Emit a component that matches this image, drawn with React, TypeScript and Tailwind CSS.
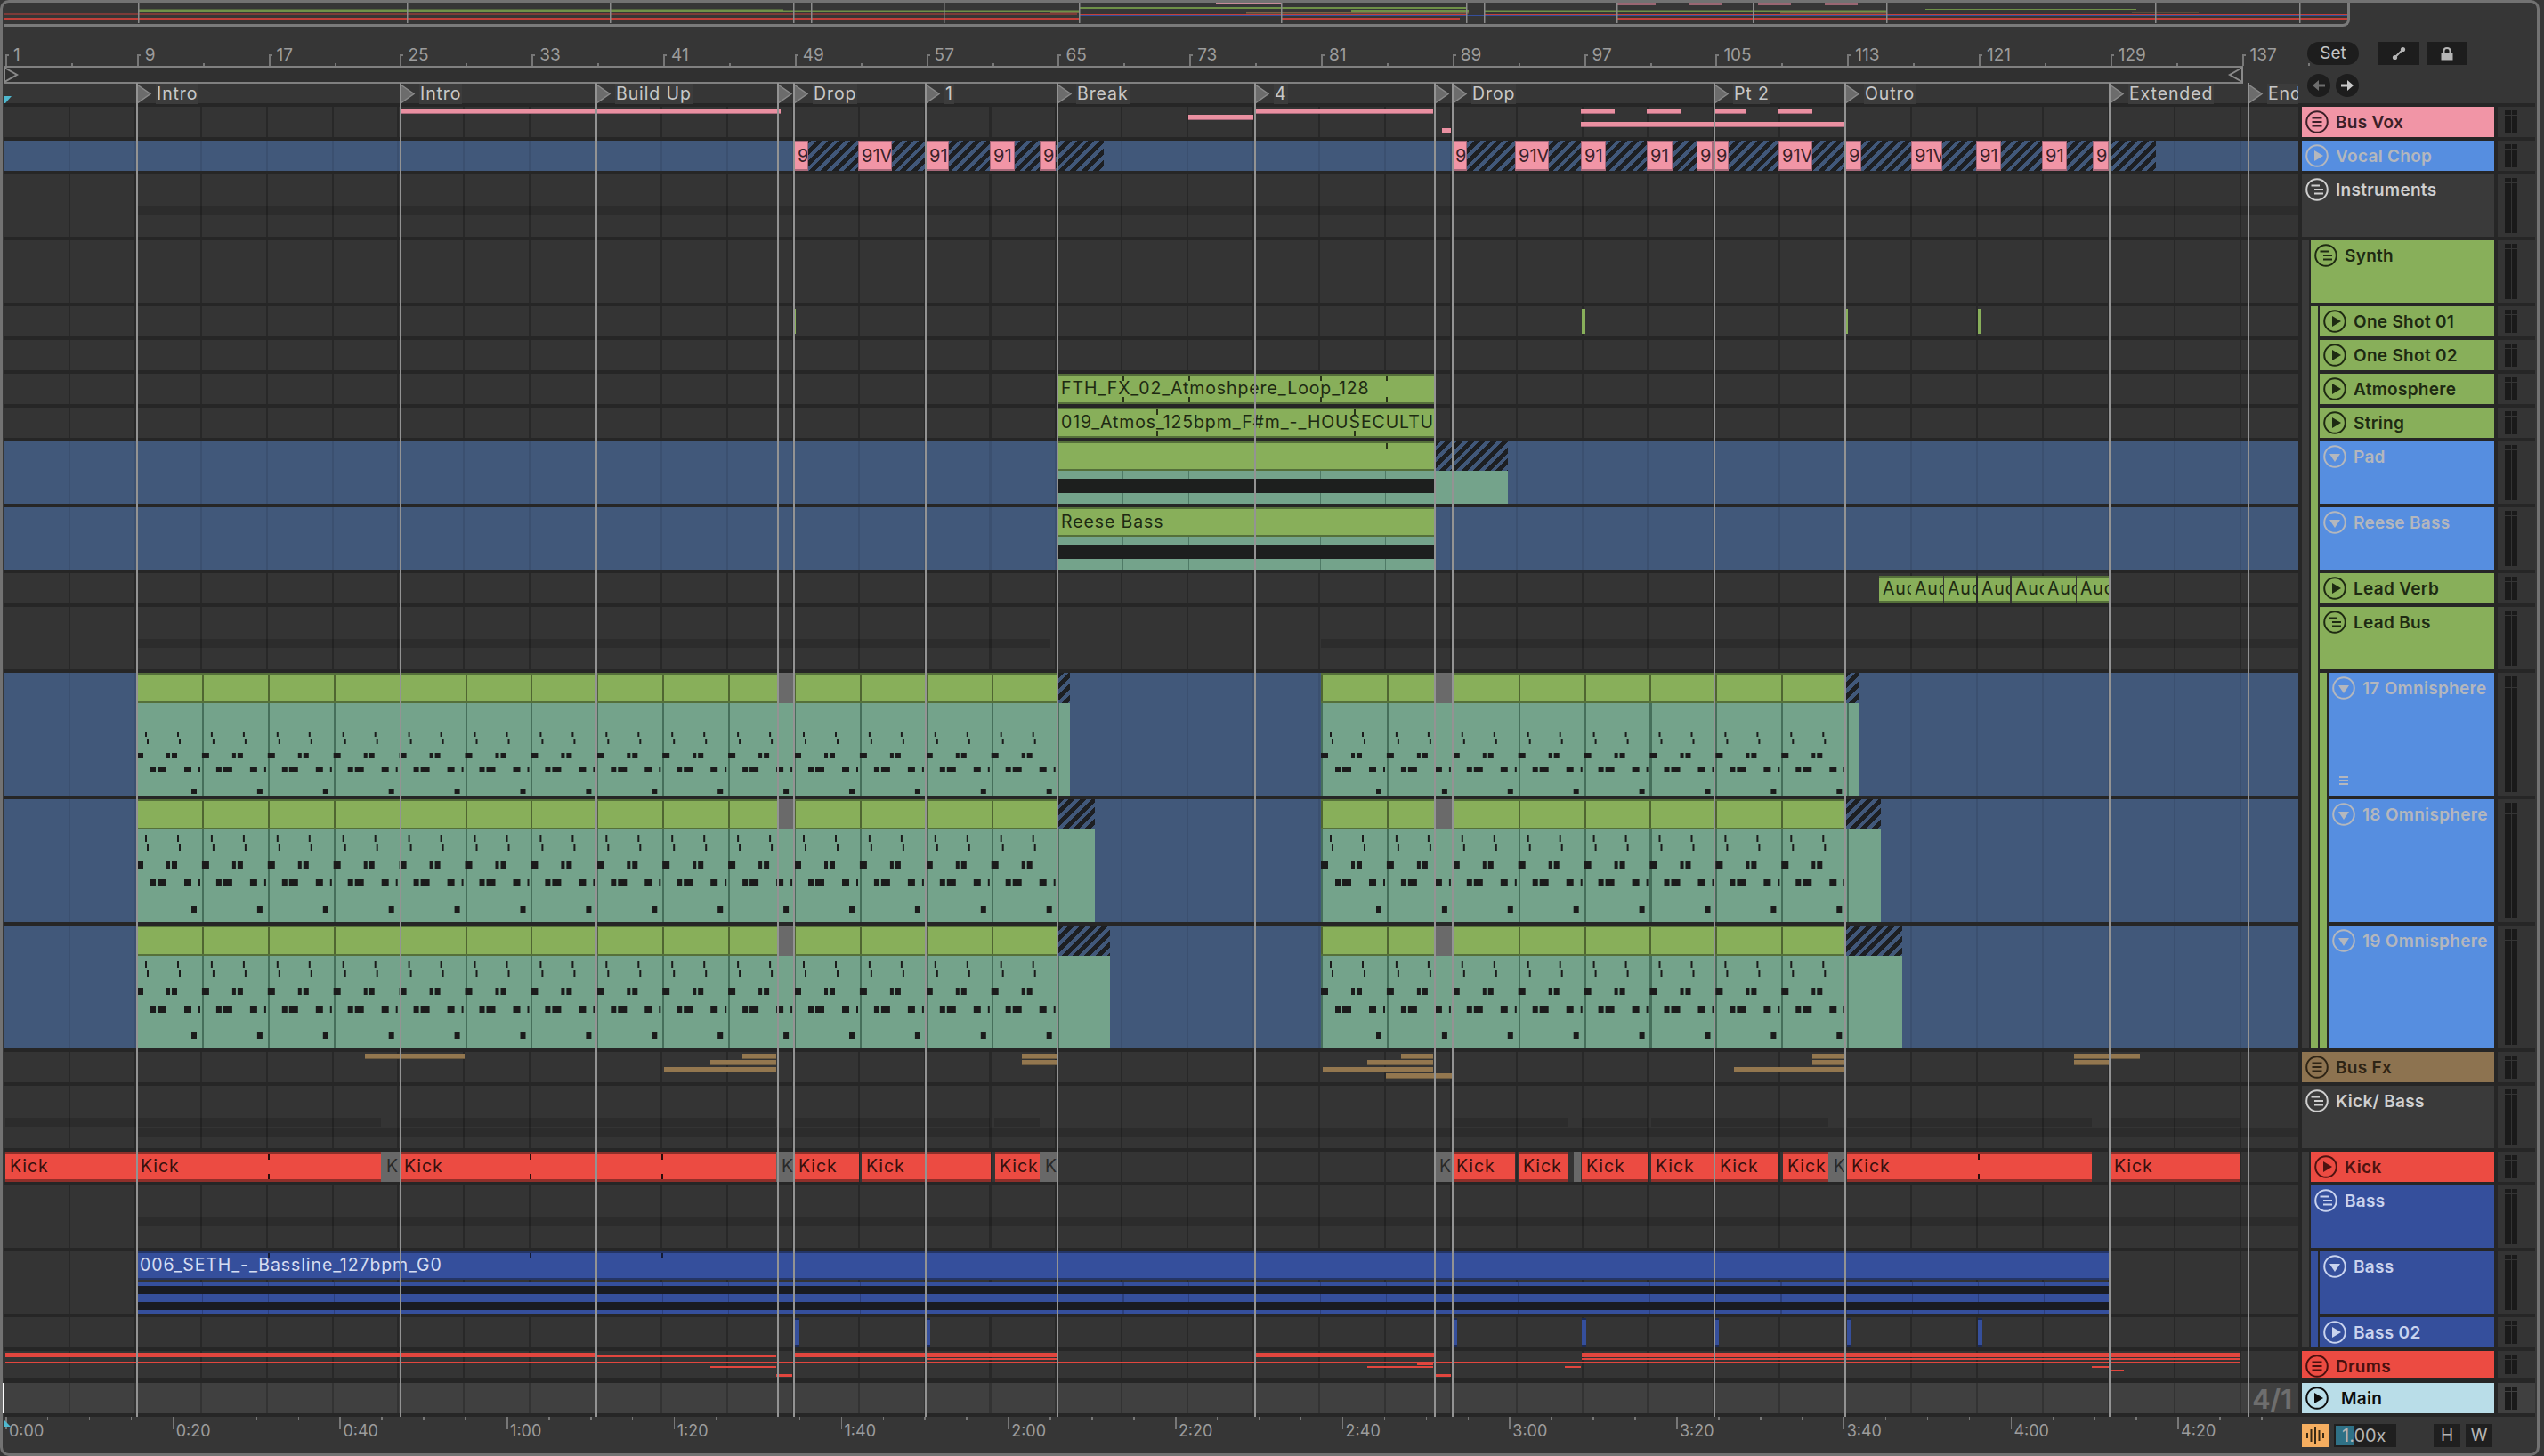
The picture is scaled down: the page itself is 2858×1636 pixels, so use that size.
import type { ReactNode } from "react";

// page x of the lane's left edge, clips below are given in page coordinates
const LANE_X = 4;
const SEG = 73.9;

const GRID_DARK =
  "bg-[repeating-linear-gradient(90deg,#282828_0,#282828_1px,#343434_1px,#343434_72.9px,#282828_72.9px,#282828_73.9px)]";
const GRID_BLUE =
  "bg-[repeating-linear-gradient(90deg,#3b5070_0,#3b5070_1px,#41587a_1px,#41587a_72.9px,#3b5070_72.9px,#3b5070_73.9px)]";
const GRID_MAIN =
  "bg-[repeating-linear-gradient(90deg,#333333_0,#333333_1px,#404040_1px,#404040_72.9px,#333333_72.9px,#333333_73.9px)]";
const HATCH =
  "bg-[repeating-linear-gradient(135deg,#1d1f22_0,#1d1f22_5px,#41587a_5px,#41587a_9px)]";
const CLIP_TEXT = "text-[19.5px] tracking-[0.9px] whitespace-nowrap";

const LOCATORS: [number, string][] = [
  [153, "Intro"],
  [449, "Intro"],
  [669, "Build Up"],
  [873, ""],
  [891, "Drop"],
  [1039, "1"],
  [1187, "Break"],
  [1409, "4"],
  [1611, ""],
  [1631, "Drop"],
  [1925, "Pt 2"],
  [2072, "Outro"],
  [2369, "Extended"],
  [2525, "End"],
];

function Box({
  x1,
  x2,
  y,
  h,
  className,
  children,
}: {
  x1: number;
  x2: number;
  y: number;
  h: number;
  className: string;
  children?: ReactNode;
}) {
  return (
    <div
      className={`absolute overflow-hidden ${className}`}
      style={{ left: x1 - LANE_X, width: x2 - x1, top: y, height: h }}
    >
      {children}
    </div>
  );
}

function Ticks({ at, x1, color, both = true }: { at: number[]; x1: number; color: string; both?: boolean }) {
  return (
    <>
      {at.map((t) => (
        <div key={t}>
          <div className="absolute top-0 w-[2px] h-[6px]" style={{ left: t - x1, background: color }} />
          {both && <div className="absolute bottom-0 w-[2px] h-[6px]" style={{ left: t - x1, background: color }} />}
        </div>
      ))}
    </>
  );
}

function ThinClips({ items, className }: { items: number[][]; className: string }) {
  return (
    <>
      {items.map(([a, b, y, h], i) => (
        <Box key={i} x1={a} x2={b} y={y} h={h} className={className} />
      ))}
    </>
  );
}

function ChopClip({ a, b, label }: { a: number; b: number; label: string }) {
  return (
    <Box
      x1={a}
      x2={b}
      y={0}
      h={34}
      className="flex items-center bg-[#f195a6] border-y-2 border-x border-[#a9697a] pl-[3px] whitespace-nowrap text-[20px] text-[#3a2229]"
    >
      {label}
    </Box>
  );
}

const CHOPS: [number, number, string][] = [
  [892, 908, "9"],
  [964, 1002, "91V"],
  [1040, 1066, "91"],
  [1112, 1140, "91"],
  [1168, 1186, "9"],
  [1631, 1648, "9"],
  [1702, 1740, "91V"],
  [1776, 1804, "91"],
  [1850, 1879, "91"],
  [1906, 1924, "9"],
  [1924, 1942, "9"],
  [1998, 2036, "91V"],
  [2073, 2091, "9"],
  [2147, 2182, "91V"],
  [2220, 2248, "91"],
  [2294, 2322, "91"],
  [2351, 2369, "9"],
];

function GreenClip({
  a,
  b,
  y = 0,
  h = 34,
  label,
  ticks = [],
  both = true,
}: {
  a: number;
  b: number;
  y?: number;
  h?: number;
  label?: string;
  ticks?: number[];
  both?: boolean;
}) {
  return (
    <Box
      x1={a}
      x2={b}
      y={y}
      h={h}
      className={`flex items-center bg-[#88af5a] border-y-2 border-[#55703a] pl-[4px] text-[#1e2a12] ${CLIP_TEXT}`}
    >
      {label}
      <Ticks at={ticks} x1={a} color="#2a3519" both={both} />
    </Box>
  );
}

// one pad-style clip: title over a solid black waveform band
function SolidClip({ label, tail, ticks }: { label?: string; tail?: boolean; ticks?: number[] }) {
  return (
    <>
      <GreenClip a={1188} b={1611} h={33} label={label} ticks={ticks} both={false} />
      <Box
        x1={1188}
        x2={1611}
        y={33}
        h={37}
        className="bg-[repeating-linear-gradient(90deg,#74a38b_0,#74a38b_72.9px,#4f7a66_72.9px,#4f7a66_73.9px)]"
      >
        <div className="absolute left-0 right-0 top-[9px] h-[16px] bg-[#1d1f1e]" />
      </Box>
      {tail && (
        <>
          <Box x1={1611} x2={1694} y={0} h={33} className={HATCH} />
          <Box x1={1611} x2={1694} y={33} h={37} className="bg-[#74a38b]" />
        </>
      )}
    </>
  );
}

const NOTES = [
  [0, 10, 2],
  [0, 46, 2],
  [1, 12, 2],
  [1, 48, 2],
  [2, 0, 8],
  [2, 34, 4],
  [2, 40, 6],
  [3, 16, 6],
  [3, 24, 10],
  [3, 54, 8],
  [3, 70, 2],
  [4, 62, 6],
];

function MidiClip({ a, b, tail, gray, noteY, noteH }: { a: number; b: number; tail: number; gray: number[]; noteY: number[]; noteH: number }) {
  const segs = Math.round((b - a) / SEG);
  return (
    <>
      <Box
        x1={a}
        x2={b}
        y={0}
        h={34}
        className="border-y-2 border-[#55703a] bg-[repeating-linear-gradient(90deg,#4f6531_0,#4f6531_2px,#88af5a_2px,#88af5a_73.9px)]"
      />
      <Box x1={gray[0]} x2={gray[1]} y={0} h={34} className="bg-[#6a6a6a]" />
      <Box x1={b} x2={tail} y={0} h={34} className={HATCH} />
      <Box
        x1={a}
        x2={tail}
        y={34}
        h={104}
        className="bg-[repeating-linear-gradient(90deg,#466f5b_0,#466f5b_2px,#74a38b_2px,#74a38b_73.9px)]"
      >
        <svg className="absolute left-0 top-0" width={tail - a} height={104}>
          {Array.from({ length: segs }).map((_, s) =>
            NOTES.map(([r, o, w], i) => (
              <rect key={`${s}-${i}`} x={s * SEG + o} y={noteY[r]} width={w} height={noteH} fill="#1b1b1b" />
            ))
          )}
        </svg>
      </Box>
    </>
  );
}

function MidiLane({ tails, noteY, noteH }: { tails: [number, number]; noteY: number[]; noteH: number }) {
  return (
    <>
      <MidiClip a={153} b={1188} tail={tails[0]} gray={[873, 891]} noteY={noteY} noteH={noteH} />
      <MidiClip a={1484} b={2072} tail={tails[1]} gray={[1611, 1631]} noteY={noteY} noteH={noteH} />
    </>
  );
}

function KickClip({ a, b, ticks = [] }: { a: number; b: number; ticks?: number[] }) {
  return (
    <Box
      x1={a}
      x2={b}
      y={0}
      h={34}
      className={`flex items-center bg-[#ec4b42] border-y-[3px] border-[#8f2f2a] pl-[5px] text-[#38100d] ${CLIP_TEXT}`}
    >
      Kick
      <Ticks at={ticks} x1={a} color="#28100e" />
    </Box>
  );
}

function GrayK({ a, b }: { a: number; b: number }) {
  return (
    <Box x1={a} x2={b} y={0} h={34} className={`flex items-center bg-[#686868] pl-[6px] text-[#2a2a2a] ${CLIP_TEXT}`}>
      {b - a > 10 ? "K" : ""}
    </Box>
  );
}

const BAND = "bg-[#000000]/15";

type Row = {
  name: string;
  h: string;
  head: string;
  icon: "group" | "stair" | "play" | "down";
  strip?: string[];
  last?: boolean;
  lane: string;
  big?: boolean;
  gap?: string;
  textX?: string;
  content?: ReactNode;
  extra?: ReactNode;
};

const G = "bg-[#3a3a3a]";
const L = "bg-[#88af5a]";
const N = "bg-[#354f9c]";
const GREEN_HEAD = "bg-[#88af5a] text-[#1e2a12]";
const BLUE_HEAD = "bg-[#568ee0] text-[#b4b7bd]";
const NAVY_HEAD = "bg-[#354f9c] text-[#c9d3ee]";

const ROWS: Row[] = [
  {
    name: "Bus Vox",
    h: "h-[34px]",
    head: "bg-[#f195a6] text-[#3b1f28]",
    icon: "group",
    lane: GRID_DARK,
    content: (
      <ThinClips
        className="bg-[#ea90a1] border-b border-[#a8687a]"
        items={[
          [449, 877, 2, 6],
          [1335, 1408, 9, 6],
          [1409, 1610, 2, 6],
          [1620, 1630, 24, 6],
          [1776, 1814, 2, 6],
          [1850, 1888, 2, 6],
          [1925, 1962, 2, 6],
          [1998, 2036, 2, 6],
          [1776, 2073, 17, 6],
        ]}
      />
    ),
  },
  {
    name: "Vocal Chop",
    h: "h-[34px]",
    head: BLUE_HEAD,
    icon: "play",
    lane: GRID_BLUE,
    content: (
      <>
        <Box x1={892} x2={1240} y={0} h={34} className={HATCH} />
        <Box x1={1631} x2={2422} y={0} h={34} className={HATCH} />
        {CHOPS.map(([a, b, t], i) => (
          <ChopClip key={i} a={a} b={b} label={t} />
        ))}
      </>
    ),
  },
  {
    name: "Instruments",
    h: "h-[70px]",
    head: "bg-[#3a3a3a] text-[#cfcfcf]",
    icon: "stair",
    lane: GRID_DARK,
    content: <Box x1={153} x2={2582} y={36} h={10} className={BAND} />,
  },
  { name: "Synth", h: "h-[70px]", head: GREEN_HEAD, icon: "stair", strip: [G], lane: GRID_DARK },
  {
    name: "One Shot 01",
    h: "h-[34px]",
    head: GREEN_HEAD,
    icon: "play",
    strip: [G, L],
    lane: GRID_DARK,
    content: (
      <ThinClips className="bg-[#88af5a]" items={[[891, 894, 3, 28], [1777, 1781, 3, 28], [2073, 2076, 3, 28], [2222, 2225, 3, 28]]} />
    ),
  },
  { name: "One Shot 02", h: "h-[34px]", head: GREEN_HEAD, icon: "play", strip: [G, L], lane: GRID_DARK },
  {
    name: "Atmosphere",
    h: "h-[34px]",
    head: GREEN_HEAD,
    icon: "play",
    strip: [G, L],
    lane: GRID_DARK,
    content: <GreenClip a={1188} b={1611} label="FTH_FX_02_Atmoshpere_Loop_128" ticks={[1261, 1335, 1483, 1557]} />,
  },
  {
    name: "String",
    h: "h-[34px]",
    head: GREEN_HEAD,
    icon: "play",
    strip: [G, L],
    lane: GRID_DARK,
    content: <GreenClip a={1188} b={1611} label="019_Atmos_125bpm_F#m_-_HOUSECULTURE" ticks={[1299, 1521]} />,
  },
  {
    name: "Pad",
    h: "h-[70px]",
    head: BLUE_HEAD,
    icon: "down",
    strip: [G, L],
    lane: GRID_BLUE,
    content: <SolidClip tail ticks={[1557]} />,
  },
  {
    name: "Reese Bass",
    h: "h-[70px]",
    head: BLUE_HEAD,
    icon: "down",
    strip: [G, L],
    lane: GRID_BLUE,
    content: <SolidClip label="Reese Bass" />,
  },
  {
    name: "Lead Verb",
    h: "h-[34px]",
    head: GREEN_HEAD,
    icon: "play",
    strip: [G, L],
    lane: GRID_DARK,
    content: (
      <>
        {[2111, 2147, 2184, 2222, 2260, 2296, 2333].map((x) => (
          <GreenClip key={x} a={x} b={x + 36} y={3} h={30} label="Aud" />
        ))}
      </>
    ),
  },
  {
    name: "Lead Bus",
    h: "h-[70px]",
    head: GREEN_HEAD,
    icon: "stair",
    strip: [G, L],
    lane: GRID_DARK,
    content: (
      <>
        <Box x1={153} x2={1180} y={36} h={10} className={BAND} />
        <Box x1={1484} x2={2582} y={36} h={10} className={BAND} />
      </>
    ),
  },
  {
    name: "17 Omnisphere",
    h: "h-[138px]",
    head: BLUE_HEAD,
    icon: "down",
    strip: [G, L, L],
    lane: GRID_BLUE,
    big: true,
    content: <MidiLane tails={[1202, 2089]} noteY={[32, 40, 56, 72, 96]} noteH={6} />,
    extra: (
      <div className="absolute left-[12px] bottom-[12px] flex w-[10px] flex-col gap-[2px]">
        <div className="h-[2px] bg-[#b4b7bd]" />
        <div className="h-[2px] bg-[#b4b7bd]" />
        <div className="h-[2px] bg-[#b4b7bd]" />
      </div>
    ),
  },
  {
    name: "18 Omnisphere",
    h: "h-[138px]",
    head: BLUE_HEAD,
    icon: "down",
    strip: [G, L, L],
    lane: GRID_BLUE,
    big: true,
    content: <MidiLane tails={[1230, 2113]} noteY={[6, 16, 36, 56, 86]} noteH={8} />,
  },
  {
    name: "19 Omnisphere",
    h: "h-[138px]",
    head: BLUE_HEAD,
    icon: "down",
    strip: [G, L, L],
    last: true,
    lane: GRID_BLUE,
    big: true,
    content: <MidiLane tails={[1247, 2137]} noteY={[6, 16, 36, 56, 86]} noteH={8} />,
  },
  {
    name: "Bus Fx",
    h: "h-[34px]",
    head: "bg-[#8d7350] text-[#2e2415]",
    icon: "group",
    lane: GRID_DARK,
    content: (
      <ThinClips
        className="bg-[#93774f] border-b border-[#6b5a40]"
        items={[
          [410, 522, 2, 6],
          [834, 872, 2, 6],
          [798, 872, 9, 6],
          [746, 872, 17, 6],
          [1148, 1187, 2, 6],
          [1148, 1187, 9, 6],
          [1574, 1610, 2, 6],
          [1536, 1610, 9, 6],
          [1486, 1610, 17, 6],
          [1557, 1631, 24, 6],
          [2036, 2072, 2, 6],
          [2036, 2072, 9, 6],
          [1948, 2072, 17, 6],
          [2330, 2404, 2, 6],
          [2330, 2369, 9, 6],
        ]}
      />
    ),
  },
  {
    name: "Kick/ Bass",
    h: "h-[70px]",
    head: "bg-[#3a3a3a] text-[#cfcfcf]",
    icon: "stair",
    lane: GRID_DARK,
    content: (
      <>
        <ThinClips
          className={BAND}
          items={[
            [6, 428, 36, 10],
            [449, 872, 36, 10],
            [892, 1112, 36, 10],
            [1117, 1168, 36, 10],
            [1631, 1762, 36, 10],
            [1777, 1851, 36, 10],
            [1855, 2054, 36, 10],
            [2075, 2350, 36, 10],
            [2370, 2516, 36, 10],
          ]}
        />
        <Box x1={153} x2={2582} y={48} h={10} className={BAND} />
      </>
    ),
  },
  {
    name: "Kick",
    h: "h-[34px]",
    head: "bg-[#ec4b42] text-[#4f1310]",
    icon: "play",
    strip: [G],
    lane: GRID_DARK,
    content: (
      <>
        <KickClip a={6} b={153} />
        <KickClip a={153} b={428} ticks={[301]} />
        <GrayK a={428} b={449} />
        <KickClip a={449} b={872} ticks={[595, 743]} />
        <GrayK a={872} b={892} />
        <KickClip a={892} b={965} />
        <KickClip a={968} b={1113} />
        <KickClip a={1118} b={1168} />
        <GrayK a={1168} b={1187} />
        <GrayK a={1611} b={1631} />
        <KickClip a={1631} b={1702} />
        <KickClip a={1706} b={1762} />
        <GrayK a={1768} b={1776} />
        <KickClip a={1777} b={1851} />
        <KickClip a={1855} b={1926} />
        <KickClip a={1927} b={1998} />
        <KickClip a={2003} b={2054} />
        <GrayK a={2054} b={2073} />
        <KickClip a={2075} b={2350} ticks={[2222]} />
        <KickClip a={2370} b={2516} />
      </>
    ),
  },
  {
    name: "Bass",
    h: "h-[70px]",
    head: NAVY_HEAD,
    icon: "stair",
    strip: [G],
    lane: GRID_DARK,
    content: <Box x1={153} x2={2582} y={36} h={10} className={BAND} />,
  },
  {
    name: "Bass",
    h: "h-[70px]",
    head: NAVY_HEAD,
    icon: "down",
    strip: [G, N],
    lane: GRID_DARK,
    content: (
      <>
        <Box
          x1={153}
          x2={2369}
          y={0}
          h={32}
          className={`flex items-center bg-[#354f9c] border-y-2 border-[#243566] pl-[4px] text-[#d5ddf2] ${CLIP_TEXT}`}
        >
          006_SETH_-_Bassline_127bpm_G0
          <Ticks at={[301, 595, 743]} x1={153} color="#161c33" both={false} />
        </Box>
        <Box x1={153} x2={2369} y={34} h={36} className="bg-[repeating-linear-gradient(90deg,#2b3f7d_0,#2b3f7d_1px,#354f9c_1px,#354f9c_73.9px)]">
          <div className="absolute left-0 right-0 top-[5px] h-[9px] bg-[#191b22]" />
          <div className="absolute left-0 right-0 top-[23px] h-[9px] bg-[#191b22]" />
        </Box>
      </>
    ),
  },
  {
    name: "Bass 02",
    h: "h-[34px]",
    head: NAVY_HEAD,
    icon: "play",
    strip: [G, N],
    last: true,
    lane: GRID_DARK,
    content: (
      <ThinClips
        className="bg-[#354f9c] border-y-2 border-[#1c2a55]"
        items={[893, 1040, 1632, 1777, 1926, 2075, 2222].map((x) => [x, x + 5, 1, 32])}
      />
    ),
  },
  {
    name: "Drums",
    h: "h-[30px]",
    head: "bg-[#ec4b42] text-[#4a100e]",
    icon: "group",
    gap: "mb-[6px]",
    lane: GRID_DARK,
    content: (
      <ThinClips
        className="bg-[#e2463e]"
        items={[
          [6, 669, 2, 2],
          [892, 1187, 2, 2],
          [1409, 1611, 2, 2],
          [1777, 2516, 2, 2],
          [6, 872, 5, 2],
          [892, 1187, 5, 2],
          [1409, 1611, 5, 2],
          [1777, 2516, 5, 2],
          [1039, 1187, 8, 2],
          [1777, 2516, 8, 2],
          [6, 2516, 12, 2],
          [1592, 1610, 14, 2],
          [798, 872, 17, 2],
          [1536, 1610, 17, 2],
          [1758, 1776, 17, 2],
          [2350, 2369, 17, 2],
          [2369, 2386, 21, 2],
          [872, 890, 26, 2],
          [872, 890, 28, 1],
          [1611, 1630, 26, 2],
          [1611, 1630, 28, 1],
        ]}
      />
    ),
  },
  {
    name: "Main",
    h: "h-[34px]",
    head: "bg-[#b9dde8] text-[#0d0d0d]",
    icon: "play",
    lane: GRID_MAIN,
    textX: "ml-[6px]",
    content: (
      <div className="absolute right-[7px] top-[1px] text-[30px] font-bold leading-[34px] text-[#6e6e6e]">4/1</div>
    ),
  },
];

function TrackIcon({ kind }: { kind: Row["icon"] }) {
  return (
    <svg className="shrink-0" width="26" height="26" viewBox="0 0 26 26" fill="none" stroke="currentColor">
      <circle cx="13" cy="13" r="11.8" strokeWidth="2" />
      {kind === "group" && (
        <path d="M7.5 8.5H18.5M7.5 13H18.5M7.5 17.5H18.5" strokeWidth="2.2" />
      )}
      {kind === "stair" && (
        <path d="M6.5 8.5H16M10 13H20M10 17.5H20" strokeWidth="2.2" />
      )}
      {kind === "play" && <path d="M10 7L20 13L10 19Z" fill="currentColor" stroke="none" />}
      {kind === "down" && <path d="M7 10H19L13 19Z" fill="currentColor" stroke="none" />}
    </svg>
  );
}

function Meter({ big, main }: { big?: boolean; main?: boolean }) {
  return (
    <div className={`flex h-full w-[42px] gap-[1px] py-[4px] pl-[8px] ${main ? "bg-[#404040]" : "bg-[#343434]"}`}>
      {["w-[7px]", "w-[6px]"].map((w) => (
        <div key={w} className={`flex ${w} flex-col gap-[1px]`}>
          <div className={`${big ? "h-[12px]" : "h-[5px]"} bg-[#1a1a1a]`} />
          <div className="flex-1 bg-[#1a1a1a]" />
        </div>
      ))}
    </div>
  );
}

function TrackRow({ row }: { row: Row }) {
  const gap = row.gap ?? "mb-[4px]";
  return (
    <div className="flex bg-[#262626]">
      <div className={`relative w-[2578px] overflow-hidden ${row.h} ${gap} ${row.lane}`}>{row.content}</div>
      <div className="ml-[4px] flex w-[216px]">
        {(row.strip ?? []).map((c, i) => (
          <div key={i} className="flex">
            <div className={`w-[8px] ${c} ${row.last ? gap : ""}`} />
            <div className="w-[2px]" />
          </div>
        ))}
        <div className={`relative flex flex-1 items-start gap-[8px] pl-[4px] pt-[4px] ${row.h} ${gap} ${row.head}`}>
          <TrackIcon kind={row.icon} />
          <span className={`pt-[1px] text-[19px] font-semibold leading-[26px] tracking-[0.3px] whitespace-nowrap ${row.textX ?? ""}`}>{row.name}</span>
          {row.extra}
        </div>
      </div>
      <div className={`ml-[4px] ${row.h} ${gap}`}>
        <Meter big={row.big} main={row.name === "Main"} />
      </div>
    </div>
  );
}

function BarRuler() {
  const labels = Array.from({ length: 18 }).map((_, i) => i * 8 + 1);
  return (
    <div className="relative h-[44px] text-[19px] text-[#9c9c9c]">
      {labels.map((n, i) => {
        const x = 6 + i * 147.8 - LANE_X;
        return (
          <div key={n}>
            <div className="absolute top-[31px] h-[13px] w-[2px] bg-[#777777]" style={{ left: x }} />
            <div className="absolute top-[31px] h-[2px] w-[4px] bg-[#777777]" style={{ left: x }} />
            <div className="absolute bottom-0 h-[3px] w-[2px] bg-[#777777]" style={{ left: x + SEG }} />
            <span className="absolute top-[21px] leading-[22px]" style={{ left: x + 9 }}>
              {n}
            </span>
          </div>
        );
      })}
    </div>
  );
}

function LoopStrip() {
  return (
    <div className="relative h-[20px] w-[2516px] border-y-2 border-[#808080] bg-[#303030]">
      <svg className="absolute -top-[1px] left-0" width="18" height="18" fill="none" stroke="#8a8a8a" strokeWidth="2">
        <path d="M1 1L15 9L1 17Z" />
      </svg>
      <svg className="absolute -top-[1px] right-0" width="18" height="18" fill="none" stroke="#8a8a8a" strokeWidth="2">
        <path d="M17 1L3 9L17 17V1Z" />
      </svg>
    </div>
  );
}

function LocatorRow() {
  return (
    <div className="relative h-[23px] overflow-hidden">
      {LOCATORS.map(([x, name]) => (
        <div key={x} className="absolute top-0 flex h-[23px] items-center" style={{ left: x - LANE_X }}>
          <svg width="18" height="23">
            <path d="M1 1L16 11.5L1 22Z" fill="#6c6c6c" stroke="#8a8a8a" strokeWidth="1.5" />
          </svg>
          {name && (
            <span className="ml-[4px] bg-[#3c3c3c] px-[1px] text-[19.5px] leading-[23px] tracking-[0.9px] whitespace-nowrap text-[#c8c8c8]">
              {name}
            </span>
          )}
        </div>
      ))}
    </div>
  );
}

function SetControls() {
  return (
    <div className="flex flex-col gap-[10px] pl-[10px] pt-[17px]">
      <div className="flex h-[26px] items-center">
        <div className="flex h-[26px] w-[58px] items-center justify-center rounded-full bg-[#1d1d1d] text-[19px] text-[#c4c4c4]">Set</div>
        <div className="ml-[22px] flex h-[26px] w-[46px] items-center justify-center bg-[#1d1d1d]">
          <svg width="16" height="16" viewBox="0 0 16 16" fill="#b5b5b5" stroke="#b5b5b5">
            <circle cx="12.5" cy="3.5" r="2.6" stroke="none" />
            <circle cx="3.5" cy="12.5" r="2.6" stroke="none" />
            <path d="M3.5 12.5L12.5 3.5" strokeWidth="2" />
          </svg>
        </div>
        <div className="ml-[8px] flex h-[26px] w-[46px] items-center justify-center bg-[#1d1d1d]">
          <svg width="16" height="16" viewBox="0 0 16 16" fill="none">
            <path d="M4.5 7V5C4.5 1 11.5 1 11.5 5V7" stroke="#b5b5b5" strokeWidth="2" />
            <rect x="1.5" y="7" width="13" height="8.5" fill="#b5b5b5" />
          </svg>
        </div>
      </div>
      <div className="flex gap-[6px]">
        {["#6d6d6d", "#c9c9c9"].map((c, i) => (
          <div key={c} className="flex h-[26px] w-[26px] items-center justify-center rounded-full bg-[#1d1d1d]">
            <svg width="16" height="14" viewBox="0 0 16 14" fill={c} className={i === 0 ? "rotate-180" : ""}>
              <path d="M1 5.5H8V1L15 7L8 13V8.5H1Z" />
            </svg>
          </div>
        ))}
      </div>
    </div>
  );
}

function Overview() {
  const lines = [155, 457, 685, 891, 911, 1060, 1212, 1439, 1647, 1667, 1816, 1969, 2119, 2421, 2583];
  const bars: [number, number, number, number, string][] = [
    [155, 880, 10.5, 2.5, "#6f9148"],
    [880, 1212, 11.5, 1.5, "#6f9148"],
    [1212, 1647, 8, 2, "#6f9148"],
    [1518, 1650, 11, 2, "#6f9148"],
    [1667, 2119, 11.5, 2, "#6f9148"],
    [2163, 2400, 10, 1, "#6f9148"],
    [457, 1647, 2, 1, "#9a6672"],
    [1366, 1439, 3, 1.5, "#c98b98"],
    [1816, 1860, 2, 4, "#9a6672"],
    [1897, 1935, 2, 4, "#9a6672"],
    [1975, 2012, 2, 4, "#9a6672"],
    [2050, 2087, 2, 4, "#9a6672"],
    [1400, 1650, 14, 1.5, "#7a6246"],
    [1180, 1212, 13, 2, "#7a6246"],
    [2000, 2119, 14, 1.5, "#7a6246"],
    [2395, 2470, 13, 1.5, "#7a6246"],
    [5, 1210, 15.5, 1, "#c2403a"],
    [1212, 2640, 17, 1, "#354f9c"],
    [1212, 1647, 16, 1, "#c2403a"],
    [1667, 2640, 16, 1, "#c2403a"],
    [5, 1212, 20, 3, "#c2403a"],
    [1212, 1439, 22, 1, "#c2403a"],
    [1439, 1640, 20, 3, "#c2403a"],
    [1667, 1816, 22, 1, "#c2403a"],
    [1816, 2640, 20, 3, "#c2403a"],
  ];
  return (
    <div className="relative h-[30px] w-[2636px] overflow-hidden rounded-br-[8px] border-b-[3px] border-r-[3px] border-[#7a7a7a]">
      <svg className="absolute left-0 top-0" width="2636" height="27" viewBox="4 0 2636 27">
        {bars.map(([a, b, y, h, c], i) => (
          <rect key={i} x={a} y={y} width={b - a} height={h} fill={c} />
        ))}
        {lines.map((x) => (
          <rect key={x} x={x} y={2} width={1.5} height={24} fill="#8c8c8c" />
        ))}
      </svg>
    </div>
  );
}

function TimeRuler() {
  const labels = ["0:00", "0:20", "0:40", "1:00", "1:20", "1:40", "2:00", "2:20", "2:40", "3:00", "3:20", "3:40", "4:00", "4:20"];
  const minor = Array.from({ length: 55 }).map((_, i) => i);
  return (
    <div className="relative h-[44px] w-[2578px] overflow-hidden text-[18px] text-[#9c9c9c]">
      {minor.map((i) => (
        <div
          key={i}
          className={`absolute top-0 w-[1.5px] bg-[#777777] ${i % 4 === 0 ? "h-[14px]" : "h-[4px]"}`}
          style={{ left: 2 + i * 46.93 }}
        />
      ))}
      {labels.map((t, i) => (
        <span key={t} className="absolute top-[5px] leading-[22px]" style={{ left: 6 + i * 187.7 }}>
          {t}
        </span>
      ))}
    </div>
  );
}

function BottomControls() {
  return (
    <div className="ml-[4px] flex h-[44px] items-start pt-[8px]">
      <div className="flex h-[26px] w-[30px] items-center justify-center bg-[#f5ae60]">
        <svg width="22" height="20" viewBox="0 0 22 20" stroke="#3a2a14" strokeWidth="2">
          <path d="M2 7V13M6.5 3V17M11 0V20M15.5 4V16M20 7V13" />
        </svg>
      </div>
      <div className="relative ml-[6px] flex h-[26px] w-[70px] items-center bg-[#1f1f1f] pl-[9px] text-[20px] text-[#b5b5b5]">
        <div className="absolute bottom-[2px] left-[2px] top-[2px] w-[20px] bg-[#2f7186]" />
        <span className="relative">1.00x</span>
      </div>
      <div className="ml-[42px] flex h-[26px] w-[30px] items-center justify-center bg-[#1f1f1f] text-[19px] text-[#b5b5b5]">H</div>
      <div className="ml-[6px] flex h-[26px] w-[30px] items-center justify-center bg-[#1f1f1f] text-[19px] text-[#b5b5b5]">W</div>
    </div>
  );
}

export default function App() {
  return (
    <div className="relative h-[1636px] w-[2858px] overflow-hidden bg-[#363636] pl-[4px] font-[family-name:Inter,sans-serif]">
      {/* Overview */}
      <Overview />

      {/* Ruler, loop brace, locators and the Set controls */}
      <div className="flex h-[86px] w-[2844px] border-b-0">
        <div className="w-[2578px]">
          <BarRuler />
          <LoopStrip />
          <LocatorRow />
        </div>
        <SetControls />
      </div>
      <div className="h-[4px] w-[2844px] bg-[#262626]" />

      {/* Tracks */}
      <div className="w-[2844px]">
        {ROWS.map((r, i) => (
          <TrackRow key={i} row={r} />
        ))}
      </div>

      {/* Time ruler */}
      <div className="flex h-[44px] w-[2844px]">
        <TimeRuler />
        <BottomControls />
      </div>

      {/* Locator lines over the arrangement */}
      {LOCATORS.map(([x]) => (
        <div key={x} className="absolute top-[93px] h-[1499px] w-[2px] bg-[#939393]" style={{ left: x }} />
      ))}

      {/* Insert marker */}
      <svg className="absolute left-[4px] top-[108px]" width="10" height="8" fill="#4fb8cf">
        <path d="M0 0H9L2 8H0Z" />
      </svg>
      <svg className="absolute left-[4px] top-[1595px]" width="10" height="8" fill="#4fb8cf">
        <path d="M0 0L8 8H0Z" />
      </svg>
      <div className="absolute left-[3px] top-[1554px] h-[34px] w-[2px] bg-white" />

      {/* Window frame */}
      <div className="pointer-events-none absolute left-0 top-0 h-[1636px] w-[2853px] rounded-[10px] border-[3px] border-[#727272]" />
    </div>
  );
}
